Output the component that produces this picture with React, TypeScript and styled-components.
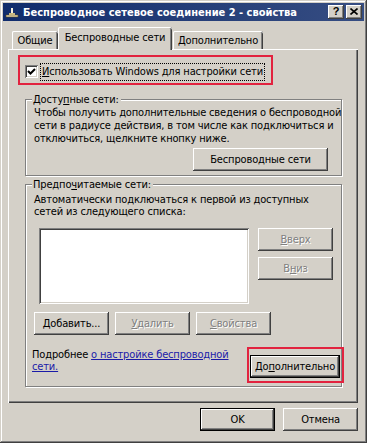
import React from "react";
import styled, { createGlobalStyle, css } from "styled-components";

const FACE = "#D4D0C8";
const FONT = `"DejaVu Sans Condensed", "Liberation Sans", sans-serif`;

const Global = createGlobalStyle`
  html, body { margin: 0; padding: 0; background: ${FACE}; }
  body { font-family: ${FONT}; font-size: 11px; color: #000; letter-spacing: -0.15px; }
  * { box-sizing: border-box; }
`;

const Window = styled.div`
  width: 367px;
  height: 443px;
  padding: 3px;
  background: ${FACE};
  box-shadow: inset -1px -1px #404040, inset 1px 1px ${FACE}, inset -2px -2px #808080, inset 2px 2px #fff;
  display: flex;
  flex-direction: column;
`;

const TitleBar = styled.div`
  height: 18px;
  display: flex;
  align-items: center;
  padding: 0 2px 0 1px;
  background: linear-gradient(90deg, #102c6c, #364d82);
  color: #fff;
  font-weight: bold;
  font-size: 11px;
  letter-spacing: 0;
  white-space: nowrap;
`;

const TitleIcon = styled.svg`
  width: 16px;
  height: 16px;
  margin-right: 3px;
  flex: none;
`;

const TitleText = styled.span`
  flex: 1;
  overflow: hidden;
`;

const TitleButtons = styled.div`
  display: flex;
  gap: 2px;
`;

const TitleButton = styled.div`
  width: 16px;
  height: 14px;
  background: ${FACE};
  box-shadow: inset -1px -1px #404040, inset 1px 1px #fff, inset -2px -2px #808080, inset 2px 2px ${FACE};
  color: #000;
  display: flex;
  align-items: center;
  justify-content: center;
  font-family: "Liberation Sans", sans-serif;
  font-weight: bold;
  font-size: 11px;
  line-height: 11px;
  padding-bottom: 1px;
`;

const Body = styled.div`
  display: flex;
  flex-direction: column;
  padding: 6px 0 0 5px;
`;

const TabStrip = styled.div`
  display: flex;
  align-items: flex-end;
  height: 22px;
  padding-left: 4px;
  position: relative;
  z-index: 1;
`;

const Tab = styled.div<{ $active?: boolean; $w: number; $ml?: number }>`
  width: ${(p) => p.$w}px;
  margin-left: ${(p) => p.$ml ?? 0}px;
  height: ${(p) => (p.$active ? 23 : 18)}px;
  margin-bottom: ${(p) => (p.$active ? -1 : 0)}px;
  background: ${FACE};
  border-radius: 2px 2px 0 0;
  box-shadow: inset 1px 0 #fff, inset 0 1px #fff, inset -1px 0 #404040, inset -2px 0 #808080;
  display: flex;
  justify-content: center;
  padding-top: ${(p) => (p.$active ? 4 : 3)}px;
  line-height: 13px;
  white-space: nowrap;
`;

const Panel = styled.div`
  width: 350px;
  height: 354px;
  background: ${FACE};
  box-shadow: inset 1px 1px #fff, inset -1px -1px #404040, inset -2px -2px #808080;
  display: flex;
  flex-direction: column;
`;

const Highlight = styled.div<{ $w: number; $h: number }>`
  width: ${(p) => p.$w}px;
  height: ${(p) => p.$h}px;
  border: 2px solid #e2233f;
  flex: none;
`;

const CheckFrame = styled(Highlight)`
  margin: 6px 0 0 10px;
  display: flex;
  align-items: center;
  padding: 3px 0 0 5px;
  gap: 3px;
`;

const CheckBox = styled.div`
  width: 13px;
  height: 13px;
  background: #fff;
  box-shadow: inset 1px 1px #808080, inset -1px -1px #fff, inset 2px 2px #404040, inset -2px -2px ${FACE};
  display: flex;
  align-items: center;
  justify-content: center;
  flex: none;
`;

const FocusLabel = styled.span`
  outline: 1px dotted #000;
  outline-offset: 0;
  padding: 1px 1px 2px 1px;
  line-height: 13px;
  white-space: nowrap;
`;

const U = styled.span`
  text-decoration: underline;
`;

const Group = styled.div<{ $mt: number; $pb: number }>`
  width: 317px;
  margin: ${(p) => p.$mt}px 0 0 17px;
  border: 1px solid #808080;
  box-shadow: inset 1px 1px #fff, 1px 1px #fff;
  display: flex;
  flex-direction: column;
  padding-bottom: ${(p) => p.$pb}px;
  flex: none;
`;

const GroupTitle = styled.div`
  align-self: flex-start;
  margin: -7px 0 0 6px;
  padding: 0 2px 0 1px;
  height: 13px;
  line-height: 13px;
  background: ${FACE};
  white-space: nowrap;
`;

const Para = styled.div<{ $lh: number; $mt?: number; $pl: number }>`
  line-height: ${(p) => p.$lh}px;
  margin-top: ${(p) => p.$mt ?? 0}px;
  padding-left: ${(p) => p.$pl}px;
  white-space: nowrap;
`;

const Line = styled.div``;

const Btn = styled.button<{ $w: number; $default?: boolean }>`
  width: ${(p) => p.$w}px;
  height: 23px;
  padding: 0 0 1px 0;
  margin: 0;
  border: none;
  font-family: ${FONT};
  font-size: 11px;
  letter-spacing: -0.15px;
  color: #000;
  background: ${FACE};
  box-shadow: inset -1px -1px #404040, inset 1px 1px #fff, inset -2px -2px #808080, inset 2px 2px ${FACE};
  white-space: nowrap;
  flex: none;
  ${(p) =>
    p.$default &&
    css`
      box-shadow: inset 0 0 0 1px #000, inset -2px -2px #404040, inset 2px 2px #fff, inset -3px -3px #808080;
    `}
  &:disabled {
    color: #808080;
    text-shadow: 1px 1px #fff;
  }
`;

const WideButton = styled(Btn)`
  align-self: flex-end;
  margin: 3px 13px 0 0;
`;

const ListRow = styled.div`
  display: flex;
  gap: 9px;
  margin-top: 10px;
  padding-left: 13px;
`;

const ListBox = styled.div`
  width: 210px;
  height: 76px;
  background: #fff;
  box-shadow: inset 1px 1px #808080, inset -1px -1px #fff, inset 2px 2px #404040, inset -2px -2px ${FACE};
`;

const SideButtons = styled.div`
  display: flex;
  flex-direction: column;
  gap: 6px;
`;

const ActionRow = styled.div`
  display: flex;
  gap: 6px;
  margin-top: 8px;
  padding-left: 8px;
`;

const BottomRow = styled.div`
  display: flex;
  align-items: flex-start;
  margin-top: 12px;
`;

const Link = styled.span`
  color: #1a1aa8;
  text-decoration: underline;
`;

const AdvancedFrame = styled(Highlight)`
  margin-left: auto;
  margin-right: -3px;
  padding: 6px 2px 3px 1px;
`;

const DialogButtons = styled.div`
  display: flex;
  justify-content: flex-end;
  gap: 8px;
  width: 350px;
  margin-top: 5px;
`;

export default function App() {
  return (
    <>
      <Global />
      <Window>
        <TitleBar>
          <TitleIcon viewBox="0 0 16 16">
            <rect x="7" y="4" width="2" height="7" fill="#f4f0e0" />
            <path d="M2 11 H14 V13 H2 Z" fill="#e8dcb0" stroke="#5a4a20" strokeWidth="0.6" />
            <rect x="5" y="9" width="6" height="2" fill="#c8b880" />
          </TitleIcon>
          <TitleText>Беспроводное сетевое соединение 2 - свойства</TitleText>
          <TitleButtons>
            <TitleButton>?</TitleButton>
            <TitleButton>
              <svg width="8" height="7" viewBox="0 0 8 7">
                <path d="M0.5 0.5 L7.5 6.5 M7.5 0.5 L0.5 6.5" stroke="#000" strokeWidth="1.6" />
              </svg>
            </TitleButton>
          </TitleButtons>
        </TitleBar>
        <Body>
          <TabStrip>
            <Tab $w={46}>Общие</Tab>
            <Tab $w={114} $active>
              Беспроводные сети
            </Tab>
            <Tab $w={90} $ml={1}>
              Дополнительно
            </Tab>
          </TabStrip>
          <Panel>
            <CheckFrame $w={255} $h={30}>
              <CheckBox>
                <svg width="9" height="9" viewBox="0 0 9 9">
                  <path d="M1 4 L3.5 6.5 L8 2" stroke="#000" strokeWidth="2" fill="none" />
                </svg>
              </CheckBox>
              <FocusLabel>
                <U>И</U>спользовать Windows для настройки сети
              </FocusLabel>
            </CheckFrame>
            <Group $mt={14} $pb={4}>
              <GroupTitle>
                Досту<U>п</U>ные сети:
              </GroupTitle>
              <Para $lh={13} $pl={8}>
                <Line>Чтобы получить дополнительные сведения о беспроводной</Line>
                <Line>сети в радиусе действия, в том числе как подключиться и</Line>
                <Line>отключиться, щелкните кнопку ниже.</Line>
              </Para>
              <WideButton $w={135}>Беспроводные сети</WideButton>
            </Group>
            <Group $mt={8} $pb={3}>
              <GroupTitle>
                Предпо<U>ч</U>итаемые сети:
              </GroupTitle>
              <Para $lh={12} $mt={3} $pl={8}>
                <Line>Автоматически подключаться к первой из доступных</Line>
                <Line>сетей из следующего списка:</Line>
              </Para>
              <ListRow>
                <ListBox />
                <SideButtons>
                  <Btn $w={75} disabled>
                    <U>В</U>верх
                  </Btn>
                  <Btn $w={75} disabled>
                    В<U>н</U>из
                  </Btn>
                </SideButtons>
              </ListRow>
              <ActionRow>
                <Btn $w={75}>
                  <U>Д</U>обавить...
                </Btn>
                <Btn $w={75} disabled>
                  <U>У</U>далить
                </Btn>
                <Btn $w={75} disabled>
                  <U>С</U>войства
                </Btn>
              </ActionRow>
              <BottomRow>
                <Para $lh={12} $mt={2} $pl={6}>
                  <Line>
                    Подробнее <Link>о настройке беспроводной</Link>
                  </Line>
                  <Line>
                    <Link>сети.</Link>
                  </Line>
                </Para>
                <AdvancedFrame $w={97} $h={36}>
                  <Btn $w={90} $default>
                    До<U>п</U>олнительно
                  </Btn>
                </AdvancedFrame>
              </BottomRow>
            </Group>
          </Panel>
          <DialogButtons>
            <Btn $w={75} $default>
              OK
            </Btn>
            <Btn $w={75}>Отмена</Btn>
          </DialogButtons>
        </Body>
      </Window>
    </>
  );
}
